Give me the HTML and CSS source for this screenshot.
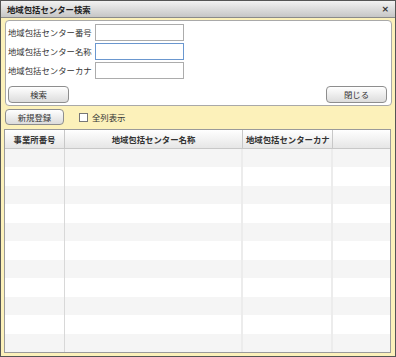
FILE: index.html
```html
<!DOCTYPE html>
<html lang="ja">
<head>
    <meta charset="UTF-8">
    <title>地域包括センター検索</title>
    <link rel="stylesheet" href="styles.css">
</head>
<body>
    <div class="window">
        <div class="titlebar">
            <span class="title">地域包括センター検索</span>
            <span class="close">×</span>
        </div>
        <div class="content">
            <div class="search-panel">
                <div class="field-row">
                    <label>地域包括センター番号</label>
                    <input type="text" class="field">
                </div>
                <div class="field-row">
                    <label>地域包括センター名称</label>
                    <input type="text" class="field focused">
                </div>
                <div class="field-row">
                    <label>地域包括センターカナ</label>
                    <input type="text" class="field">
                </div>
                <div class="button-row">
                    <button class="btn">検索</button>
                    <button class="btn">閉じる</button>
                </div>
            </div>

            <div class="toolbar">
                <button class="btn btn-small">新規登録</button>
                <label class="check"><span class="box"></span>全列表示</label>
            </div>

            <div class="grid">
                <div class="grid-head">
                    <div class="cell c1">事業所番号</div>
                    <div class="cell c2">地域包括センター名称</div>
                    <div class="cell c3">地域包括センターカナ</div>
                    <div class="cell c4"></div>
                </div>
                <div class="grid-body" id="grid-body"></div>
            </div>
        </div>
    </div>

    <script>
        // 空の行を描く
        const body = document.getElementById("grid-body");
        for (let i = 0; i < 11; i++) {
            const row = document.createElement("div");
            row.className = "grid-row" + (i % 2 === 0 ? " odd" : "");
            row.innerHTML = '<div class="cell c1"></div><div class="cell c2"></div><div class="cell c3"></div><div class="cell c4"></div>';
            body.appendChild(row);
        }
    </script>
</body>
</html>
```

FILE: styles.css
```css
body {
    margin: 0;
    font-family: "Noto Sans CJK JP", "Liberation Sans", sans-serif;
    font-size: 8.4px;
    color: #222;
}
.window {
    width: 396px;
    height: 357px;
    box-sizing: border-box;
    border: 1px solid #555;
    background-color: #fcf1ba;
    display: flex;
    flex-direction: column;
}
.titlebar {
    height: 18px;
    display: flex;
    align-items: center;
    justify-content: space-between;
    padding: 0 6px;
    background: linear-gradient(#f2f2f2, #c6c6c6);
    border-bottom: 1px solid #8a8a8a;
}
.title {
    font-weight: bold;
    color: #222;
}
.close {
    font-weight: bold;
    font-size: 9px;
    color: #333;
    font-family: "DejaVu Sans", sans-serif;
}
.content {
    flex: 1;
    display: flex;
    flex-direction: column;
    padding: 2px 3px 3px 3px;
}
.search-panel {
    margin-left: 1px;
    height: 86px;
    box-sizing: border-box;
    background-color: #fff;
    border: 1px solid #a9a9a9;
    border-radius: 4px;
    padding: 3px 3px 0 2px;
    display: flex;
    flex-direction: column;
    gap: 2px;
}
.field-row {
    display: flex;
    align-items: center;
    height: 17px;
}
.field-row label {
    width: 87px;
    white-space: nowrap;
    color: #333;
}
.field {
    width: 89px;
    height: 17px;
    box-sizing: border-box;
    border: 1px solid #acacac;
    padding: 0 2px;
    margin: 0;
}
.field.focused {
    border-color: #6a97cf;
}
.button-row {
    display: flex;
    justify-content: space-between;
    margin-top: 5px;
    padding-right: 1px;
}
.btn {
    width: 61px;
    height: 17px;
    font-family: inherit;
    font-size: 8.4px;
    color: #333;
    border: 1px solid #8e8e8e;
    border-radius: 4px;
    background: linear-gradient(#ffffff, #dcdcdc);
    padding: 0;
}
.toolbar {
    display: flex;
    align-items: center;
    gap: 15px;
    height: 17px;
    margin: 3px 0 3px 1px;
}
.btn-small {
    width: 59px;
    height: 16px;
}
.check {
    display: flex;
    align-items: center;
    gap: 4px;
    color: #333;
}
.box {
    width: 7px;
    height: 7px;
    border: 1px solid #777;
    background-color: #fff;
}
.grid {
    flex: 1;
    background-color: #fff;
    border: 1px solid #9a9a9a;
    margin-right: 1px;
    display: flex;
    flex-direction: column;
}
.grid-head {
    display: flex;
    height: 18px;
    background: linear-gradient(#ffffff, #e6e6e6);
    border-bottom: 1px solid #c8c8c8;
    font-weight: bold;
}
.grid-head .cell {
    display: flex;
    align-items: center;
    justify-content: center;
    border-right: 1px solid #c8c8c8;
    color: #333;
    white-space: nowrap;
    overflow: hidden;
}
.grid-head .c3 {
    justify-content: flex-start;
    padding-left: 3px;
}
.cell {
    box-sizing: border-box;
}
.c1 { width: 60px; }
.c2 { width: 178px; }
.c3 { width: 90px; }
.c4 { flex: 1; border-right: none !important; }
.grid-row {
    display: flex;
    height: 18.5px;
}
.grid-row.odd {
    background-color: #f5f5f5;
}
.grid-row .cell {
    border-right: 2px solid #ececec;
}
.grid-row .c1 {
    border-right: 1px solid #d8d8d8;
}
```
